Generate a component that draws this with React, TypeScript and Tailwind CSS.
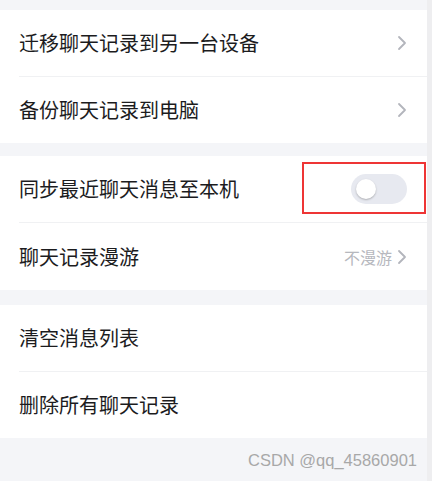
import React from "react";

const Chevron = () => (
  <svg width="10" height="16" viewBox="0 0 10 16" fill="none">
    <path d="M2 2l6 6-6 6" stroke="#b3b5bc" strokeWidth="1.8" strokeLinecap="round" strokeLinejoin="round" />
  </svg>
);

const Row = ({ label, right, last, tall }: { label: string; right?: React.ReactNode; last?: boolean; tall?: boolean }) => (
  <div className="pl-[19px]">
    <div
      className={`flex items-center justify-between pr-[20px] ${tall ? "h-[67px]" : "h-[66px]"} ${last ? "" : "h-[67px] border-b border-[#f0f1f3]"}`}
    >
      <span className="text-[20px] text-[#1c1c1e]">{label}</span>
      {right}
    </div>
  </div>
);

export default function App() {
  return (
    <div
      className="w-[432px] h-[481px] bg-[#f4f5f8] flex overflow-hidden"
      style={{ fontFamily: '"Noto Sans CJK SC", "Noto Sans", sans-serif' }}
    >
      <div className="w-[427px] flex flex-col pt-[10px]">
        <div className="bg-white">
          <Row label="迁移聊天记录到另一台设备" right={<Chevron />} />
          <Row label="备份聊天记录到电脑" right={<Chevron />} last />
        </div>
        <div className="bg-white mt-[13px]">
          <Row
            label="同步最近聊天消息至本机"
            right={
              <div className="relative">
                <div className="w-[56px] h-[30px] rounded-full bg-[#e7e9f0] flex items-center pl-[5px]">
                  <div className="w-[20px] h-[20px] rounded-full bg-white shadow-[0_1px_2px_rgba(0,0,0,0.25)]" />
                </div>
                <div className="absolute -left-[49px] -top-[12px] w-[124px] h-[52px] border-2 border-[#ee3535]" />
              </div>
            }
          />
          <Row
            label="聊天记录漫游"
            right={
              <div className="flex items-center gap-[5px]">
                <span className="text-[16px] text-[#b6b8be]">不漫游</span>
                <Chevron />
              </div>
            }
            last
            tall
          />
        </div>
        <div className="bg-white mt-[15px]">
          <Row label="清空消息列表" />
          <Row label="删除所有聊天记录" last />
        </div>
        <div className="flex-1 flex justify-end items-end pb-[8px] pr-[10px]">
          <span className="text-[16.5px] text-[#a8a8a8]" style={{ fontFamily: '"Liberation Sans", Arial, sans-serif' }}>
            CSDN @qq_45860901
          </span>
        </div>
      </div>
      <div className="flex-1 bg-[#eeeef0]" />
    </div>
  );
}
